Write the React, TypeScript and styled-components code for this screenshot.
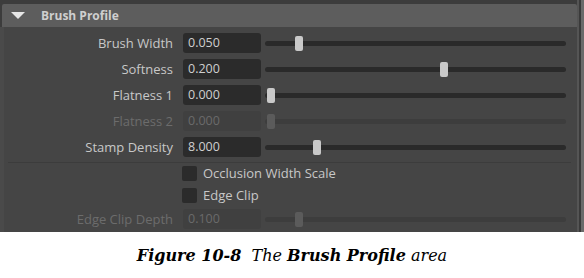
import React from "react";
import styled, { createGlobalStyle } from "styled-components";

const Global = createGlobalStyle`
  html, body {
    margin: 0;
    padding: 0;
    background: #ffffff;
  }
  body {
    font-family: "Open Sans", "Liberation Sans", sans-serif;
  }
`;

type SliderRow = {
  label: string;
  value: string;
  thumb: number;
  disabled?: boolean;
};

const topRows: SliderRow[] = [
  { label: "Brush Width", value: "0.050", thumb: 30 },
  { label: "Softness", value: "0.200", thumb: 175 },
  { label: "Flatness 1", value: "0.000", thumb: 2 },
  { label: "Flatness 2", value: "0.000", thumb: 2, disabled: true },
  { label: "Stamp Density", value: "8.000", thumb: 48 },
];

const checks = ["Occlusion Width Scale", "Edge Clip"];

const bottomRow: SliderRow = { label: "Edge Clip Depth", value: "0.100", thumb: 30, disabled: true };

export default function App() {
  return (
    <>
      <Global />
      <Panel>
        <Main>
          <HeaderWrap>
            <Header>
              <Arrow />
              <HeaderTitle>Brush Profile</HeaderTitle>
            </Header>
          </HeaderWrap>
          <Body>
            {topRows.map((r) => (
              <Row key={r.label} row={r} />
            ))}
            <Separator />
            {checks.map((c) => (
              <CheckRow key={c}>
                <Box />
                <CheckLabel>{c}</CheckLabel>
              </CheckRow>
            ))}
            <Row row={bottomRow} />
          </Body>
        </Main>
        <Scroll />
      </Panel>
      <Caption>
        <b>Figure 10-8</b>&nbsp; The <b>Brush Profile</b> area
      </Caption>
    </>
  );
}

function Row({ row }: { row: SliderRow }) {
  const off = !!row.disabled;
  return (
    <FieldRow>
      <Label off={off}>{row.label}</Label>
      <Input off={off}>{row.value}</Input>
      <Track off={off}>
        <Thumb off={off} style={{ left: row.thumb }} />
      </Track>
    </FieldRow>
  );
}

const Panel = styled.div`
  display: flex;
  height: 232px;
  background: #454545;
`;

const Main = styled.div`
  flex: 1;
  display: flex;
  flex-direction: column;
`;

const HeaderWrap = styled.div`
  background: #3c3c3c;
  padding: 4px 0 0 2px;
`;

const Header = styled.div`
  height: 23px;
  background: #5d5d5d;
  border-radius: 2px 2px 0 0;
  display: flex;
  align-items: center;
`;

const Arrow = styled.span`
  width: 0;
  height: 0;
  margin-left: 9px;
  border-left: 7px solid transparent;
  border-right: 7px solid transparent;
  border-top: 7px solid #e6e6e6;
`;

const HeaderTitle = styled.span`
  margin-left: 16px;
  font-size: 12px;
  font-weight: 700;
  color: #cfcfcf;
`;

const Body = styled.div`
  display: flex;
  flex-direction: column;
  gap: 6px;
  padding-top: 6px;
  border-left: 4px solid #4a4a4a;
  flex: 1;
`;

const FieldRow = styled.div`
  display: grid;
  grid-template-columns: 169px 78px 1fr;
  column-gap: 10px;
  align-items: center;
  height: 20px;
  padding-right: 11px;
`;

const Label = styled.div<{ off: boolean }>`
  text-align: right;
  font-size: 13px;
  color: ${(p) => (p.off ? "#6c6c6c" : "#c8c8c8")};
  white-space: nowrap;
`;

const Input = styled.div<{ off: boolean }>`
  height: 20px;
  box-sizing: border-box;
  padding: 2px 0 0 5px;
  border-radius: 3px;
  background: ${(p) => (p.off ? "#404040" : "#2b2b2b")};
  color: ${(p) => (p.off ? "#6a6a6a" : "#cfcfcf")};
  font-size: 12.5px;
  line-height: 16px;
`;

const Track = styled.div<{ off: boolean }>`
  position: relative;
  margin-left: -6px;
  height: 5px;
  border-radius: 3px;
  background: ${(p) => (p.off ? "#3d3d3d" : "#2a2a2a")};
`;

const Thumb = styled.div<{ off: boolean }>`
  position: absolute;
  top: -5px;
  width: 8px;
  height: 15px;
  border-radius: 2px;
  background: ${(p) => (p.off ? "#5b5b5b" : "#c9c9c9")};
`;

const Separator = styled.div`
  height: 1px;
  margin: -1px 6px -4px 4px;
  background: #3c3c3c;
`;

const CheckRow = styled.div`
  display: flex;
  align-items: center;
  gap: 6px;
  height: 16px;
  padding-left: 178px;
`;

const Box = styled.div`
  width: 15px;
  height: 15px;
  border-radius: 2px;
  background: #2b2b2b;
`;

const CheckLabel = styled.span`
  font-size: 13px;
  color: #c8c8c8;
`;

const Scroll = styled.div`
  width: 7px;
  box-sizing: border-box;
  background: #555555;
  border-right: 3px solid #6a6a6a;
  box-shadow: inset -2px 0 0 #3a3a3a;
`;

const Caption = styled.div`
  height: 46px;
  display: flex;
  align-items: center;
  justify-content: center;
  font-family: "DejaVu Serif", serif;
  font-style: italic;
  font-size: 16px;
  color: #000;
  white-space: pre;
`;
